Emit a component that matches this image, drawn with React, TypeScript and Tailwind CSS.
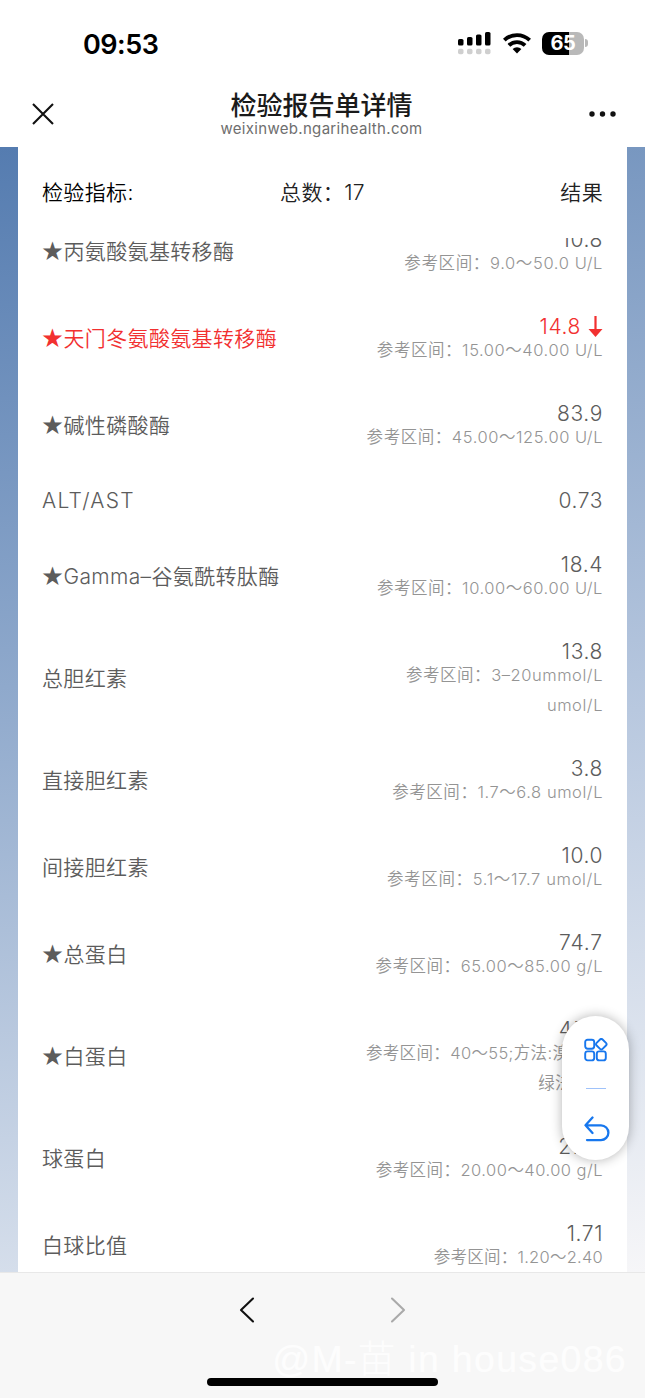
import React from "react";

type Result = {
  name: string;
  value: string;
  refs: string[];
  low?: boolean;
  valueTracking?: string;
  refTracking?: string;
};

const results: Result[] = [
  { name: "★丙氨酸氨基转移酶", value: "10.8", refs: ["参考区间：9.0～50.0 U/L"], refTracking: "tracking-[0.64px]" },
  { name: "★天门冬氨酸氨基转移酶", value: "14.8", refs: ["参考区间：15.00～40.00 U/L"], low: true },
  { name: "★碱性磷酸酶", value: "83.9", refs: ["参考区间：45.00～125.00 U/L"] },
  { name: "ALT/AST", value: "0.73", refs: [] },
  { name: "★Gamma–谷氨酰转肽酶", value: "18.4", refs: ["参考区间：10.00～60.00 U/L"] },
  { name: "总胆红素", value: "13.8", refs: ["参考区间：3–20ummol/L", "umol/L"] },
  { name: "直接胆红素", value: "3.8", refs: ["参考区间：1.7～6.8 umol/L"] },
  { name: "间接胆红素", value: "10.0", refs: ["参考区间：5.1～17.7 umol/L"], refTracking: "tracking-[0.66px]" },
  { name: "★总蛋白", value: "74.7", refs: ["参考区间：65.00～85.00 g/L"], valueTracking: "tracking-[0.9px]" },
  { name: "★白蛋白", value: "47.1", refs: ["参考区间：40～55;方法:溴甲酚", "绿法 g/L"], valueTracking: "tracking-[2.4px]", refTracking: "tracking-[0.35px]" },
  { name: "球蛋白", value: "27.6", refs: ["参考区间：20.00～40.00 g/L"], valueTracking: "tracking-[1.2px]", refTracking: "tracking-[0.47px]" },
  { name: "白球比值", value: "1.71", refs: ["参考区间：1.20～2.40"], refTracking: "tracking-[0.25px]" },
];

function StatusBar() {
  return (
    <div className="flex h-[74px] shrink-0 items-start justify-between pl-[83px] pr-[57px] pt-[30px]">
      <span className="text-[27px] font-semibold leading-[29px] tracking-[-0.5px] text-black">09:53</span>
      <div className="flex items-center gap-[11px] pt-[1px]">
        <svg width="34" height="24" viewBox="0 0 34 24">
          <rect x="0" y="8" width="5.5" height="6.5" rx="1.6" />
          <rect x="9" y="6" width="5.5" height="8.5" rx="1.6" />
          <rect x="18" y="3.5" width="5.5" height="11" rx="1.6" />
          <rect x="27" y="1" width="5.5" height="13.5" rx="1.6" />
          <g fill="#cfcfcf">
            <rect x="0" y="17.7" width="5.5" height="5.5" rx="1.8" />
            <rect x="9" y="17.7" width="5.5" height="5.5" rx="1.8" />
            <rect x="18" y="17.7" width="5.5" height="5.5" rx="1.8" />
            <rect x="27" y="17.7" width="5.5" height="5.5" rx="1.8" />
          </g>
        </svg>
        <svg width="28" height="22" viewBox="0 0 28 22">
          <g fill="none" stroke="#000" strokeWidth="3.8">
            <path d="M1.3 8.2a18.2 18.2 0 0 1 25.4 0" />
            <path d="M5.9 13.3a11.7 11.7 0 0 1 16.2 0" />
          </g>
          <path d="M9.6 17a6.5 6.5 0 0 1 8.8 0L14 21.5z" />
        </svg>
        <div className="flex items-center gap-[1px]">
          <div className="flex h-[23px] w-[42px] items-center justify-center rounded-[7px] bg-[linear-gradient(90deg,#000_65%,#b9b9b9_65%)] text-[20px] font-bold leading-none tracking-[-0.3px] text-white">
            65
          </div>
          <div className="h-[8px] w-[3px] rounded-r-full bg-[#b9b9b9]" />
        </div>
      </div>
    </div>
  );
}

function TitleBar() {
  return (
    <div className="flex h-[73px] shrink-0 items-start justify-between pl-[32px] pr-[29px]">
      <svg className="mt-[29px]" width="22" height="22" viewBox="0 0 22 22" stroke="#111" strokeWidth="2.1">
        <path d="M1 1l20 20M21 1L1 21" />
      </svg>
      <div className="flex flex-col items-center pt-[17px]">
        <div className="text-[26px] font-medium leading-[30px] text-[#1a1a1a]">检验报告单详情</div>
        <div className="-mt-px text-[15px] leading-[17px] tracking-[0.32px] text-[#6e6e6e]">weixinweb.ngarihealth.com</div>
      </div>
      <svg className="mt-[36px]" width="27" height="8" viewBox="0 0 27 8" fill="#111">
        <circle cx="3" cy="4" r="2.7" />
        <circle cx="13.5" cy="4" r="2.7" />
        <circle cx="24" cy="4" r="2.7" />
      </svg>
    </div>
  );
}

function Name({ text }: { text: string }) {
  const starred = text.startsWith("★");
  const latin = text === "ALT/AST";
  return (
    <div className={`flex items-center whitespace-nowrap pt-[2px] text-[21px] leading-[30px] ${latin ? "tracking-[1.3px]" : "tracking-[0.35px]"}`}>
      {starred && <span className="-mt-[5px] w-[21.5px] shrink-0 font-['Noto_Sans_CJK_JP',sans-serif]">★</span>}
      {starred ? text.slice(1) : text}
    </div>
  );
}

function ResultRow({ row }: { row: Result }) {
  const single = row.refs.length === 0;
  return (
    <div className={`flex shrink-0 items-center justify-between ${row.low ? "text-[#f23030]" : "text-[#5c5c5c]"} ${single ? "h-[64px]" : ""}`}>
      <Name text={row.name} />
      <div className={`flex flex-col items-end ${single ? "pt-[2px]" : "pb-[16px] pt-[23px]"}`}>
        <div className={`flex h-[20px] items-center gap-[7px] text-[21px] leading-[20px] ${row.valueTracking ?? "tracking-[0.6px]"} ${single ? "" : "-mb-[2px]"}`}>
          {row.value}
          {row.low && (
            <svg className="-mt-[2px]" width="15" height="21" viewBox="0 0 15 21" fill="#f23030">
              <path d="M6.4 0h2.2v13H14.5l-7 8L0.5 13h5.9z" />
            </svg>
          )}
        </div>
        {row.refs.map((line) => (
          <div key={line} className={`h-[30px] whitespace-nowrap text-[16.5px] leading-[31px] text-[#949494] ${row.refTracking ?? "tracking-[0.55px]"}`}>
            {line}
          </div>
        ))}
      </div>
    </div>
  );
}

function FloatingMenu() {
  return (
    <div className="absolute left-[562px] top-[1016px] flex h-[144px] w-[67px] flex-col items-center rounded-full bg-white pt-[22px] shadow-[0_0_12px_rgba(0,0,0,0.3)]">
      <svg width="24" height="24" viewBox="0 0 24 24" fill="none" stroke="#1777ee" strokeWidth="1.9">
        <rect x="1.2" y="1.7" width="9" height="9" rx="2.4" />
        <rect x="1.2" y="13.4" width="9" height="9" rx="2.4" />
        <rect x="12.8" y="13.4" width="9" height="9" rx="2.4" />
        <rect x="13.1" y="2" width="8.4" height="8.4" rx="1.8" transform="rotate(45 17.3 6.2)" />
      </svg>
      <div className="mt-[26px] h-px w-[20px] bg-[#9fc2fa]" />
      <svg className="mt-[27px] ml-[2px]" width="26" height="27" viewBox="0 0 26 27" fill="none" stroke="#1777ee" strokeWidth="2.3" strokeLinecap="round" strokeLinejoin="round">
        <path d="M8.5 1.5L1.5 9.3L8.5 17M1.5 9.3H17a7.4 7.4 0 0 1 0 14.8H3" />
      </svg>
    </div>
  );
}

export default function App() {
  return (
    <div className="relative flex h-[1398px] w-[645px] flex-col overflow-hidden bg-white font-['Inter','Noto_Sans_CJK_SC',sans-serif]">
      <StatusBar />
      <TitleBar />
      <main className="flex h-[1125px] shrink-0">
        <div className="w-[18px] shrink-0 bg-[linear-gradient(178deg,#d5deeb,#8fa9cc_52%,#557cb0)] rotate-180" />
        <section className="flex min-w-0 flex-1 flex-col pl-[24px] pr-[24px]">
          <header className="grid h-[91px] shrink-0 grid-cols-3 items-center text-[21px] font-[350] leading-[30px] tracking-[0.35px] text-[#222]">
            <span className="text-black">检验指标:</span>
            <span className="justify-self-center">总数：17</span>
            <span className="justify-self-end">结果</span>
          </header>
          <div className="flex min-h-0 flex-1 flex-col overflow-hidden">
            <div className="-mt-[31px] flex flex-col font-[350]">
              {results.map((row) => (
                <ResultRow key={row.name} row={row} />
              ))}
            </div>
          </div>
        </section>
        <div className="w-[18px] shrink-0 bg-[linear-gradient(178deg,#7897c0,#b8c8df_50%,#f6f6f8)]" />
      </main>
      <footer className="flex h-[126px] shrink-0 flex-col items-center border-t border-[#e8e8e8] bg-[#f7f7f7]">
        <div className="flex gap-[135px] pt-[24px]">
          <svg width="16" height="26" viewBox="0 0 16 26" fill="none" stroke="#111" strokeWidth="2.1" strokeLinecap="round" strokeLinejoin="round">
            <path d="M14 1.5L2 13L14 24.5" />
          </svg>
          <svg width="16" height="26" viewBox="0 0 16 26" fill="none" stroke="#aaa" strokeWidth="2.1" strokeLinecap="round" strokeLinejoin="round">
            <path d="M2 1.5L14 13L2 24.5" />
          </svg>
        </div>
        <div className="mt-[55px] h-[8px] w-[231px] rounded-full bg-black" />
      </footer>
      <FloatingMenu />
      <div className="absolute right-[18px] top-[1337px] whitespace-nowrap font-['Liberation_Sans','Noto_Sans_CJK_SC',sans-serif] text-[37.5px] font-light leading-[44px] tracking-[1.3px] text-white/80">
        @M-苗 in house086
      </div>
    </div>
  );
}
